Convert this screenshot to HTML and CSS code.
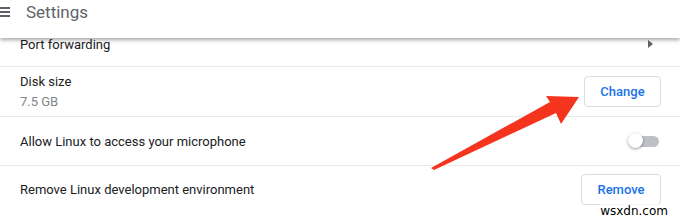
FILE: index.html
```html
<!DOCTYPE html>
<html>
<head lang="en">
    <meta charset="UTF-8">
    <title>Settings</title>
    <link rel="stylesheet" href="styles.css">
</head>
<body>
<div class="page">
    <div class="header">
        <div class="menu">
            <span></span><span></span><span></span>
        </div>
        <div class="title">Settings</div>
    </div>
    <div class="row row-port">
        <div class="label">Port forwarding</div>
        <div class="caret"></div>
    </div>
    <div class="row row-disk">
        <div>
            <div class="label">Disk size</div>
            <div class="sub">7.5 GB</div>
        </div>
        <button class="btn btn-change">Change</button>
    </div>
    <div class="row row-mic">
        <div class="label">Allow Linux to access your microphone</div>
        <div class="toggle"><span class="knob"></span></div>
    </div>
    <div class="row row-remove">
        <div class="label">Remove Linux development environment</div>
        <button class="btn btn-remove">Remove</button>
    </div>

    <svg class="arrow" width="680" height="219" viewBox="0 0 680 219">
        <polygon points="431,168 550,102 546,96 579,97 561,124 556,113 434,170" fill="#f5341d"/>
    </svg>
    <div class="mark">wsxdn.com</div>
</div>
</body>
</html>
```
FILE: styles.css
```css
* {
    margin: 0;
    padding: 0;
}
body {
    background: #fff;
    font-family: Roboto, "Liberation Sans", sans-serif;
    color: #202124;
}
.page {
    width: 680px;
    height: 219px;
    position: relative;
    overflow: hidden;
}
.header {
    height: 38px;
    display: flex;
    align-items: center;
    background: #fff;
    box-shadow: 0 2px 4px rgba(0, 0, 0, 0.35);
    position: relative;
    z-index: 2;
}
.menu {
    width: 10px;
    display: flex;
    flex-direction: column;
    gap: 2px;
    margin-right: 16px;
    margin-top: -14px;
}
.menu span {
    display: block;
    height: 2px;
    background: #5f6368;
}
.title {
    font-size: 17px;
    color: #5f6368;
    margin-top: -14px;
}
.row {
    display: flex;
    align-items: center;
    justify-content: space-between;
    padding: 0 19px 0 20px;
    border-bottom: 1px solid #e8e8e8;
    font-size: 13px;
}
.row-port {
    height: 28px;
    align-items: flex-start;
}
.row-port .label {
    margin-top: -1px;
}
.caret {
    width: 0;
    height: 0;
    border-top: 4px solid transparent;
    border-bottom: 4px solid transparent;
    border-left: 5px solid #5f6368;
    margin-right: 8px;
    margin-top: 2px;
}
.row-disk {
    height: 49px;
}
.sub {
    color: #80868b;
    margin-top: 5px;
}
.row-mic {
    height: 48px;
}
.row-remove {
    height: 46px;
    border-bottom: none;
}
.btn {
    height: 31px;
    background: #fff;
    border: 1px solid #dadce0;
    border-radius: 4px;
    color: #1a73e8;
    font-family: Roboto, "Liberation Sans", sans-serif;
    font-size: 13px;
    font-weight: 500;
}
.btn-change {
    width: 77px;
}
.btn-remove {
    width: 80px;
}
.toggle {
    width: 31px;
    height: 14px;
    position: relative;
    margin-right: 2px;
}
.toggle::before {
    content: "";
    position: absolute;
    left: 6px;
    right: 0;
    top: 2px;
    height: 11px;
    border-radius: 6px;
    background: #bdc1c6;
}
.knob {
    position: absolute;
    left: 0;
    top: -1px;
    width: 15px;
    height: 15px;
    border-radius: 50%;
    background: #fff;
    box-shadow: 0 1px 3px rgba(0, 0, 0, 0.4);
}
.arrow {
    position: absolute;
    left: 0;
    top: 0;
    z-index: 3;
}
.mark {
    position: absolute;
    right: 12px;
    bottom: 1px;
    font-family: "DejaVu Sans", sans-serif;
    font-size: 12px;
    color: #000;
    background: rgba(255, 255, 255, 0.7);
    z-index: 3;
}
```
